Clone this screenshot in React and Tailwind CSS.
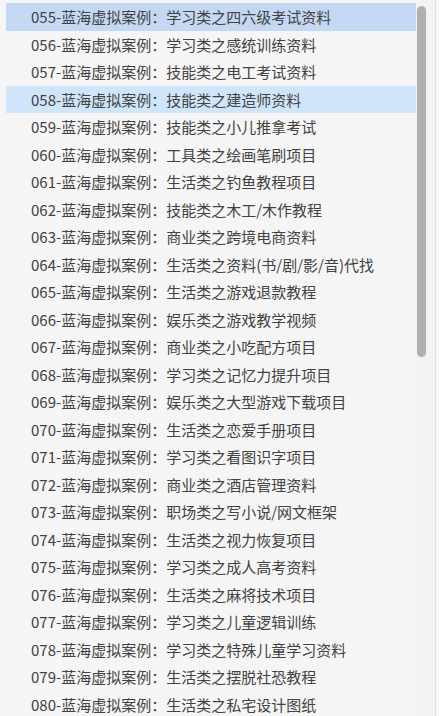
const items = [
  "055-蓝海虚拟案例：学习类之四六级考试资料",
  "056-蓝海虚拟案例：学习类之感统训练资料",
  "057-蓝海虚拟案例：技能类之电工考试资料",
  "058-蓝海虚拟案例：技能类之建造师资料",
  "059-蓝海虚拟案例：技能类之小儿推拿考试",
  "060-蓝海虚拟案例：工具类之绘画笔刷项目",
  "061-蓝海虚拟案例：生活类之钓鱼教程项目",
  "062-蓝海虚拟案例：技能类之木工/木作教程",
  "063-蓝海虚拟案例：商业类之跨境电商资料",
  "064-蓝海虚拟案例：生活类之资料(书/剧/影/音)代找",
  "065-蓝海虚拟案例：生活类之游戏退款教程",
  "066-蓝海虚拟案例：娱乐类之游戏教学视频",
  "067-蓝海虚拟案例：商业类之小吃配方项目",
  "068-蓝海虚拟案例：学习类之记忆力提升项目",
  "069-蓝海虚拟案例：娱乐类之大型游戏下载项目",
  "070-蓝海虚拟案例：生活类之恋爱手册项目",
  "071-蓝海虚拟案例：学习类之看图识字项目",
  "072-蓝海虚拟案例：商业类之酒店管理资料",
  "073-蓝海虚拟案例：职场类之写小说/网文框架",
  "074-蓝海虚拟案例：生活类之视力恢复项目",
  "075-蓝海虚拟案例：学习类之成人高考资料",
  "076-蓝海虚拟案例：生活类之麻将技术项目",
  "077-蓝海虚拟案例：学习类之儿童逻辑训练",
  "078-蓝海虚拟案例：学习类之特殊儿童学习资料",
  "079-蓝海虚拟案例：生活类之摆脱社恐教程",
  "080-蓝海虚拟案例：生活类之私宅设计图纸",
];

export default function App() {
  return (
    <div
      className="flex w-[439px] h-[716px] overflow-hidden bg-[#f5f5f5] text-[#424242] text-[15px]"
      style={{ fontFamily: '"Microsoft YaHei", "Noto Sans CJK SC", sans-serif' }}
    >
      <div className="flex flex-col w-[416px] pl-[6px] pt-[3px] shrink-0">
        {items.map((t, i) => (
          <div
            key={i}
            className={
              "h-[27.5px] shrink-0 flex items-center pl-[25px] whitespace-nowrap leading-none " +
              (i === 0 ? "bg-[#c5d8f3]" : i === 3 ? "bg-[#cfe5f9]" : "")
            }
          >
            {t}
          </div>
        ))}
      </div>
      <div className="w-[19px] shrink-0 bg-[#f3f3f3] pt-[6px] pl-[1px]">
        <div className="w-[9px] h-[351px] rounded-full bg-[#afafaf]" />
      </div>
      <div className="w-px shrink-0 bg-[#e4e4e4]" />
      <div className="flex-1 bg-[#f8f8f8]" />
    </div>
  );
}
